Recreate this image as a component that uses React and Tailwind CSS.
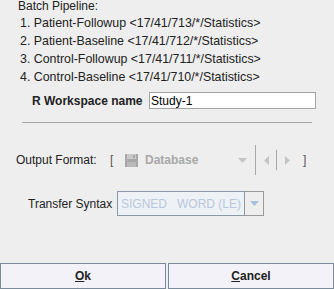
import React from 'react';

const items = [
    '1. Patient-Followup <17/41/713/*/Statistics>',
    '2. Patient-Baseline <17/41/712/*/Statistics>',
    '3. Control-Followup <17/41/711/*/Statistics>',
    '4. Control-Baseline <17/41/710/*/Statistics>',
];

const Floppy = () => (
    <svg width="13" height="13" viewBox="0 0 13 13">
        <rect x="0" y="0" width="13" height="13" fill="#a8a8a8" />
        <rect x="2" y="0" width="9" height="5" fill="#c9c9c9" />
        <rect x="8" y="1" width="2" height="3" fill="#a8a8a8" />
        <rect x="2" y="8" width="9" height="5" fill="#b9b9b9" />
    </svg>
);

const App = () => {
    return (
        <div
            className="w-[334px] h-[289px] bg-[#eeeeee] flex flex-col overflow-hidden text-[12px] text-[#222]"
            style={{ fontFamily: '"Liberation Sans", Arial, sans-serif' }}
        >
            {/* Pipeline list */}
            <div className="pl-[18px] h-[12px] leading-[12px]">Batch Pipeline:</div>
            <div className="mt-[2px] leading-[18px] text-[12.4px]">
                {items.map((t) => (
                    <div key={t} className="pl-[20px]">{t}</div>
                ))}
            </div>

            {/* Workspace name */}
            <div className="flex items-center mt-[6px] h-[17px]">
                <span className="pl-[32px] w-[149px] font-bold text-[#222]">R Workspace name</span>
                <input
                    defaultValue="Study-1"
                    className="w-[167px] h-[17px] border border-[#a3a3a3] bg-white px-[1px] text-[12px] text-black outline-none"
                />
            </div>

            <div className="mt-[13px] ml-[22px] w-[290px] h-px bg-[#a3a3a3]" />

            {/* Output format */}
            <div className="flex items-center mt-[22px] h-[30px]">
                <span className="pl-[16px] w-[110px]">Output Format:</span>
                <span className="text-[#555] w-[15px]">[</span>
                <Floppy />
                <span className="ml-[7px] font-bold text-[#a8a8a8] w-[90px]">Database</span>
                <svg width="9" height="5" viewBox="0 0 9 5" className="ml-[3px]">
                    <polygon points="0,0 9,0 4.5,5" fill="#c4c4c4" />
                </svg>
                <div className="ml-[8px] w-px h-[30px] bg-[#a8a8a8]" />
                <svg width="5" height="9" viewBox="0 0 5 9" className="ml-[8px]">
                    <polygon points="5,0 5,9 0,4.5" fill="#c4c4c4" />
                </svg>
                <div className="ml-[7px] w-px h-[20px] bg-[#a8a8a8]" />
                <svg width="5" height="9" viewBox="0 0 5 9" className="ml-[8px]">
                    <polygon points="0,0 0,9 5,4.5" fill="#c4c4c4" />
                </svg>
                <span className="ml-[13px] text-[#555]">]</span>
            </div>

            {/* Transfer syntax */}
            <div className="flex items-center mt-[16px] h-[25px]">
                <span className="pl-[28px] w-[117px]">Transfer Syntax</span>
                <div className="flex h-[25px]">
                    <div className="w-[128px] h-[25px] border border-[#8a98a8] bg-[#eef1f6] flex items-center pl-[3px] text-[#b8c8dc] whitespace-pre">
                        SIGNED   WORD (LE)
                    </div>
                    <div className="w-[19px] h-[25px] border border-l-0 border-[#9a9a9a] flex items-center justify-center">
                        <svg width="9" height="5" viewBox="0 0 9 5">
                            <polygon points="0,0 9,0 4.5,5" fill="#a8c0da" />
                        </svg>
                    </div>
                </div>
            </div>

            <div className="flex-1" />

            {/* Buttons */}
            <div className="flex h-[26px] gap-[2px]">
                <button className="w-[166px] h-[26px] border border-[#7b8b9b] bg-[#f3f2f8] font-bold text-[12px] text-[#222]">
                    <span className="underline">O</span>k
                </button>
                <button className="flex-1 h-[26px] border border-[#7b8b9b] bg-[#f3f2f8] font-bold text-[12px] text-[#222]">
                    <span className="underline">C</span>ancel
                </button>
            </div>
        </div>
    );
};

export default App;
